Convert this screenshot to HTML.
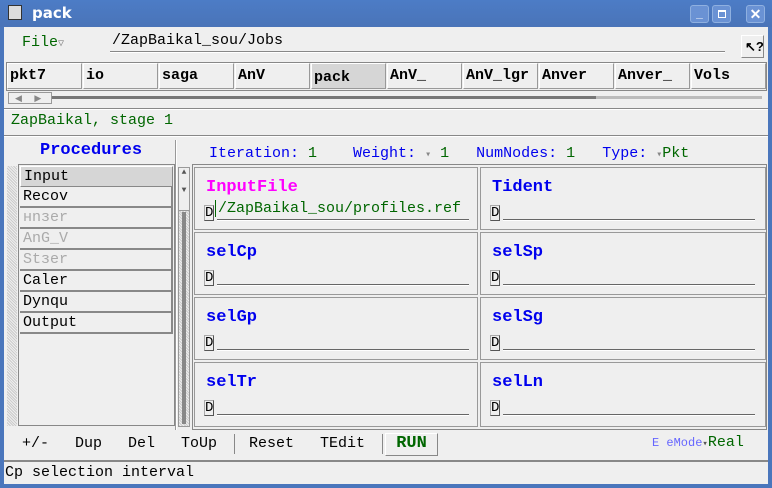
<!DOCTYPE html>
<html><head><style>
*{margin:0;padding:0;box-sizing:border-box}
body{width:772px;height:488px;overflow:hidden;background:#4a76bc;font-family:"Liberation Mono",monospace;position:relative}
.a{position:absolute}
.win{left:4px;top:27px;width:764px;height:457px;background:#efefef}
.tab{position:absolute;top:63px;height:26px;width:75px;border:1px solid #999;border-top-color:#fff;border-left-color:#fff;font:bold 15px "Liberation Mono",monospace;padding:3px 0 0 2px;color:#000;background:#efefef}
.item{position:absolute;left:20px;width:153px;height:21px;border-bottom:2px solid #888;border-right:2px solid #888;font:15px "Liberation Mono",monospace;padding:1px 0 0 3px}
.cell{position:absolute;border:1px solid #999;background:#efefef}
.lbl{position:absolute;left:11px;top:10px;font:bold 17px "Liberation Mono",monospace;color:#0000ee}
.d{position:absolute;left:9px;top:37px;width:10px;height:16px;border:1px solid #aaa;border-right-color:#555;border-bottom-color:#555;font:14px "Liberation Mono",monospace;line-height:14px}
.ln{position:absolute;left:22px;top:51px;width:252px;border-top:1px solid #666;border-bottom:1px solid #fff}
.bt{position:absolute;top:435px;font:15px "Liberation Mono",monospace;color:#000}
</style></head><body>
<div class="a" style="left:0;top:0;width:772px;height:27px;background:linear-gradient(#4c7cc6,#4a74b8)"></div>
<div class="a" style="left:8px;top:5px;width:14px;height:15px;background:#ddd;border:1px solid #333"></div>
<div class="a" style="left:32px;top:4px;color:#fff;font:bold 15px 'DejaVu Sans',sans-serif">pack</div>
<div class="a" style="left:690px;top:5px;width:19px;height:18px;background:#6a92d4;border:1px solid #8fb0e0;border-radius:3px;color:#fff;font:bold 12px sans-serif;text-align:center">_</div>
<div class="a" style="left:712px;top:5px;width:19px;height:18px;background:#6a92d4;border:1px solid #8fb0e0;border-radius:3px"><div style="margin:4px 5px;width:8px;height:8px;border:1px solid #fff;border-top-width:2px"></div></div>
<div class="a" style="left:746px;top:5px;width:19px;height:18px;background:#6a92d4;border:1px solid #8fb0e0;border-radius:3px;color:#fff;font:bold 14px sans-serif;text-align:center;line-height:16px">✕</div>
<div class="a win"></div>
<div class="a" style="left:22px;top:34px;color:#006600;font:15px 'Liberation Mono',monospace">File<span style="color:#888;font-size:10px">▽</span></div>
<div class="a" style="left:112px;top:32px;font:15px 'Liberation Mono',monospace">/ZapBaikal_sou/Jobs</div>
<div class="a" style="left:110px;top:51px;width:615px;border-top:1px solid #888;border-bottom:1px solid #fff"></div>
<div class="a" style="left:741px;top:35px;width:23px;height:23px;border:1px solid #fff;border-right-color:#888;border-bottom-color:#888;font:bold 13px sans-serif;padding:3px 0 0 3px">↖?</div>
<div class="a" style="left:6px;top:62px;width:761px;height:29px;border:1px solid #888"></div>
<div class="tab" style="left:7px">pkt7</div>
<div class="tab" style="left:83px">io</div>
<div class="tab" style="left:159px">saga</div>
<div class="tab" style="left:235px">AnV</div>
<div class="tab" style="left:311px;background:#d6d6d6;padding-top:5px">pack</div>
<div class="tab" style="left:387px">AnV_</div>
<div class="tab" style="left:463px">AnV_lgr</div>
<div class="tab" style="left:539px">Anver</div>
<div class="tab" style="left:615px">Anver_</div>
<div class="tab" style="left:691px">Vols</div>
<div class="a" style="left:8px;top:92px;width:44px;height:12px;border:1px solid #999;font:9px sans-serif;color:#888;padding-left:6px">◀&nbsp;&nbsp;&nbsp;&nbsp;&nbsp;▶</div>
<div class="a" style="left:52px;top:96px;width:544px;height:3px;background:#777"></div>
<div class="a" style="left:596px;top:96px;width:166px;height:3px;background:#bbb"></div>
<div class="a" style="left:4px;top:108px;width:764px;border-top:1px solid #888;border-bottom:1px solid #fff"></div>
<div class="a" style="left:11px;top:112px;color:#006600;font:15px 'Liberation Mono',monospace">ZapBaikal, stage 1</div>
<div class="a" style="left:4px;top:135px;width:764px;border-top:1px solid #888;border-bottom:1px solid #fff"></div>
<div class="a" style="left:40px;top:141px;color:#0000ee;font:bold 17px 'Liberation Mono',monospace">Procedures</div>
<div class="a" style="left:175px;top:140px;width:2px;height:290px;background:#999;border-right:1px solid #fff"></div>
<div class="a" style="left:7px;top:166px;width:10px;height:260px;background:repeating-linear-gradient(45deg,#ccc 0 1px,#eee 1px 2px)"></div>
<div class="a" style="left:18px;top:164px;width:157px;height:262px;border:1px solid #888"></div>
<div class="item" style="top:166px;background:#d6d6d6;border:1px solid #fff;border-right-color:#888;border-bottom-color:#888">Input</div>
<div class="item" style="top:187px">Recov</div>
<div class="item" style="top:208px;color:#aaa">нnзer</div>
<div class="item" style="top:229px;color:#aaa">AnG_V</div>
<div class="item" style="top:250px;color:#aaa">Stзer</div>
<div class="item" style="top:271px">Caler</div>
<div class="item" style="top:292px">Dynqu</div>
<div class="item" style="top:313px">Output</div>
<div class="a" style="left:209px;top:145px;font:15px 'Liberation Mono',monospace;color:#0000ee;white-space:pre">Iteration: <span style="color:#006600">1</span>    Weight: <span style="color:#888;font-size:10px">▾</span> <span style="color:#006600">1</span>   NumNodes: <span style="color:#006600">1</span>   Type: <span style="color:#888;font-size:10px">▾</span><span style="color:#006600">Pkt</span></div>
<div class="a" style="left:178px;top:167px;width:12px;height:260px;border:1px solid #999;background:repeating-linear-gradient(45deg,#ccc 0 1px,#eee 1px 2px)"></div>
<div class="a" style="left:178px;top:167px;width:12px;height:44px;background:#eee;border:1px solid #999;font-size:8px;text-align:center;color:#555">▲<br><br>▼</div>
<div class="a" style="left:182px;top:212px;width:4px;height:212px;background:#888"></div>
<div class="a" style="left:192px;top:164px;width:575px;height:266px;border:1px solid #888"></div>
<div class="cell" style="left:194px;top:167px;width:284px;height:63px"><div class="lbl" style="color:#ff00ff">InputFile</div><div class="d">D</div><div class="ln" style="top:51px"></div><div class="a" style="left:20px;top:32px;font:15px 'Liberation Mono',monospace;color:#006600;border-left:1px solid #006600;padding-left:2px">/ZapBaikal_sou/profiles.ref</div></div>
<div class="cell" style="left:480px;top:167px;width:286px;height:63px"><div class="lbl">Tident</div><div class="d">D</div><div class="ln"></div></div>
<div class="cell" style="left:194px;top:232px;width:284px;height:63px"><div class="lbl">selCp</div><div class="d">D</div><div class="ln"></div></div>
<div class="cell" style="left:480px;top:232px;width:286px;height:63px"><div class="lbl">selSp</div><div class="d">D</div><div class="ln"></div></div>
<div class="cell" style="left:194px;top:297px;width:284px;height:63px"><div class="lbl">selGp</div><div class="d">D</div><div class="ln"></div></div>
<div class="cell" style="left:480px;top:297px;width:286px;height:63px"><div class="lbl">selSg</div><div class="d">D</div><div class="ln"></div></div>
<div class="cell" style="left:194px;top:362px;width:284px;height:65px"><div class="lbl">selTr</div><div class="d">D</div><div class="ln"></div></div>
<div class="cell" style="left:480px;top:362px;width:286px;height:65px"><div class="lbl">selLn</div><div class="d">D</div><div class="ln"></div></div>
<div class="bt" style="left:22px">+/-</div>
<div class="bt" style="left:75px">Dup</div>
<div class="bt" style="left:128px">Del</div>
<div class="bt" style="left:181px">ToUp</div>
<div class="a" style="left:234px;top:434px;width:1px;height:20px;background:#888"></div>
<div class="bt" style="left:249px">Reset</div>
<div class="bt" style="left:320px">TEdit</div>
<div class="a" style="left:382px;top:434px;width:1px;height:20px;background:#888"></div>
<div class="a" style="left:385px;top:433px;width:53px;height:23px;border:1px solid #fff;border-right-color:#888;border-bottom-color:#888;color:#006600;font:bold 17px 'Liberation Mono',monospace;text-align:center;padding-top:0px">RUN</div>
<div class="a" style="left:652px;top:434px;font:12px 'Liberation Mono',monospace;color:#66f">E eMode<span style="color:#555;font-size:9px">▾</span><span style="color:#006600;font-size:15px">Real</span></div>
<div class="a" style="left:4px;top:460px;width:764px;border-top:2px solid #888"></div>
<div class="a" style="left:5px;top:464px;font:15px 'Liberation Mono',monospace">Cp selection interval</div>
</body></html>
